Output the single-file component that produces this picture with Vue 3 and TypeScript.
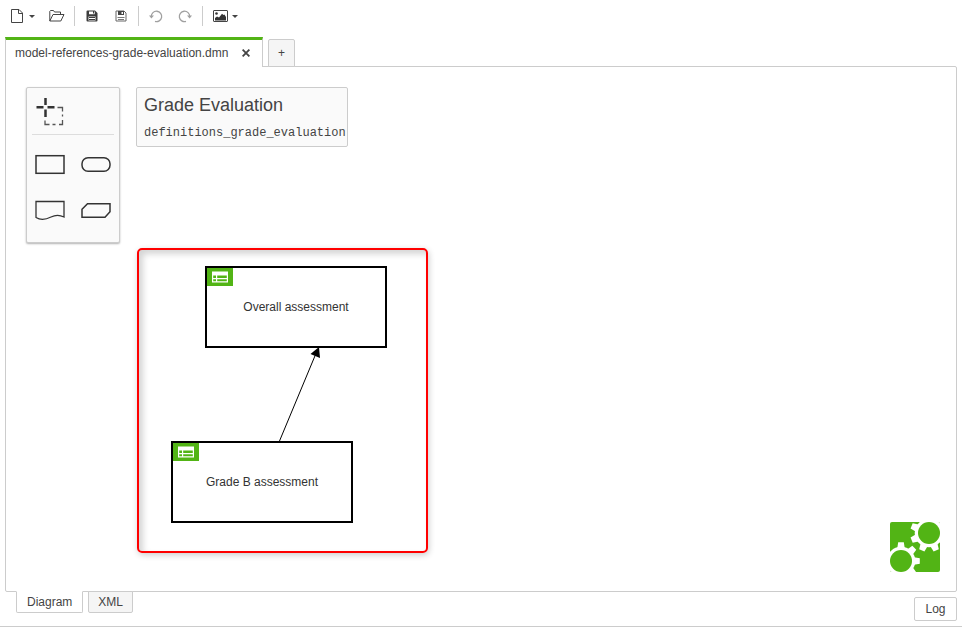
<script setup lang="ts">
import { ref } from 'vue'

interface DecisionNode {
  id: string
  label: string
  x: number
  y: number
}

const decisions: DecisionNode[] = [
  { id: 'overall', label: 'Overall assessment', x: 199, y: 199 },
  { id: 'grade-b', label: 'Grade B assessment', x: 165, y: 374 },
]

const views = ['Diagram', 'XML']
const activeView = ref('Diagram')
</script>

<template>
  <div class="app">
    <header class="toolbar">
      <div class="group">
        <button class="tool menu" type="button" aria-label="New file">
          <svg width="12" height="14" viewBox="0 0 12 14" fill="none" stroke="#444">
            <path d="M.5.5H8L11.500 4V13.500H.5ZM7.500.5V4.500H11.500" />
          </svg>
          <span class="caret"></span>
        </button>
        <button class="tool" type="button" aria-label="Open file">
          <svg width="16" height="12" viewBox="0 0 16 12" fill="none" stroke="#444" stroke-linejoin="round">
            <path d="M.8 11V1.300L1.500.5H4.500L5.500 2H11.500V4.500M.8 11 4 4.500H15L11.800 11Z" />
          </svg>
        </button>
      </div>
      <div class="group">
        <button class="tool" type="button" aria-label="Save">
          <svg width="12" height="12" viewBox="0 0 12 12">
            <path fill="#3c3c3c" fill-rule="evenodd" d="M.5 1.500Q.5.5 1.500.5H9L11.500 3V10.500Q11.500 11.500 10.500 11.500H1.500Q.5 11.500.5 10.500ZM3 1.500V4.200H8.700V1.500ZM2.500 6.500V10.500H9.500V6.500Z" />
            <path stroke="#3c3c3c" d="M3 7.500H9M3 9.500H9M7.500 1V3.500" />
          </svg>
        </button>
        <button class="tool" type="button" aria-label="Save as">
          <svg width="12" height="12" viewBox="0 0 12 12">
            <path fill="none" stroke="#666" d="M1 1H9L11 3V11H1Z" />
            <path fill="#444" fill-rule="evenodd" d="M3 1H9V5H3ZM6.500 2V4H8V2Z" />
            <path stroke="#777" d="M2.500 7.500H9.500M3 9.500H9" />
          </svg>
        </button>
      </div>
      <div class="group">
        <button class="tool" type="button" aria-label="Undo">
          <svg width="14" height="14" viewBox="0 0 14 14" fill="none" stroke="#a0a0a0" stroke-width="1.300">
            <path d="M2.300 7.500A5.200 5.200 0 1 1 6 12.400" />
            <path d="M0 6.500H5L2.400 9.500Z" fill="#a0a0a0" stroke="none" />
          </svg>
        </button>
        <button class="tool" type="button" aria-label="Redo">
          <svg width="14" height="14" viewBox="0 0 14 14" fill="none" stroke="#a0a0a0" stroke-width="1.300">
            <path d="M11.700 7.500A5.200 5.200 0 1 0 8 12.400" />
            <path d="M14 6.500H9L11.600 9.500Z" fill="#a0a0a0" stroke="none" />
          </svg>
        </button>
      </div>
      <div class="group">
        <button class="tool menu image" type="button" aria-label="Export as image">
          <svg width="15" height="12" viewBox="0 0 15 12">
            <rect x=".5" y=".5" width="14" height="11" rx=".5" fill="none" stroke="#444" />
            <circle cx="3.500" cy="3.500" r="1.300" fill="#333" />
            <path fill="#333" d="M2 10.500V8L4 6.500 6 7.500 9 3.800 10.500 5 11.500 4.500 13 7V10.500Z" />
          </svg>
          <span class="caret"></span>
        </button>
      </div>
    </header>

    <nav class="file-tabs">
      <div class="file-tab">
        <span>model-references-grade-evaluation.dmn</span>
        <button class="close" type="button" aria-label="Close tab">
          <svg width="8" height="8" viewBox="0 0 8 8" stroke="#444" stroke-width="1.800">
            <path d="M.6.6 7.400 7.400M7.400.6.6 7.400" />
          </svg>
        </button>
      </div>
      <button class="add-tab" type="button">+</button>
    </nav>

    <main class="canvas">
      <aside class="palette">
        <button class="entry" type="button" aria-label="Lasso tool">
          <svg width="30" height="30" viewBox="0 0 30 30" fill="none" stroke="#333">
            <path stroke-width="2.500" d="M10.500 1V8M10.500 12.500V20M1.500 10.300H8.500M12.500 10.300H19.500" />
            <path stroke="#555" stroke-width="1.300" d="M22.500 10.500H27.500V14.500M27.500 17.500V19.500M27.500 23V27.500H24M20.500 27.500H17.500M14.500 27.500H10V23.500" />
          </svg>
        </button>
        <hr class="separator" />
        <div class="shapes">
          <button class="entry" type="button" aria-label="Create decision">
            <svg width="30" height="30" viewBox="0 0 30 30" fill="none" stroke="#333" stroke-width="1.500">
              <rect x="1" y="5.700" width="28" height="17.600" />
            </svg>
          </button>
          <button class="entry" type="button" aria-label="Create input data">
            <svg width="30" height="30" viewBox="0 0 30 30" fill="none" stroke="#333" stroke-width="1.500">
              <rect x="1" y="7.700" width="28" height="13.600" rx="6" />
            </svg>
          </button>
          <button class="entry" type="button" aria-label="Create knowledge source">
            <svg width="30" height="30" viewBox="0 0 30 30" fill="none" stroke="#333" stroke-width="1.300">
              <path d="M1 21.500V5.500H29V21C25 19 21 18.500 16 21S6 24.500 1 21.500Z" />
            </svg>
          </button>
          <button class="entry" type="button" aria-label="Create business knowledge model">
            <svg width="30" height="30" viewBox="0 0 30 30" fill="none" stroke="#333" stroke-width="1.500">
              <path d="M1 21.300V13.300L6.500 7.700H29V15.700L24 21.300Z" />
            </svg>
          </button>
        </div>
      </aside>

      <section class="definitions">
        <h1>Grade Evaluation</h1>
        <code>definitions_grade_evaluation</code>
      </section>

      <div class="highlight"></div>

      <svg class="edge" width="60" height="100" viewBox="0 0 60 100">
        <path d="M13.500 94 51 4" stroke="#000" fill="none" />
        <path d="M53 0 54 11 44.500 7Z" />
      </svg>

      <div
        v-for="node in decisions"
        :key="node.id"
        class="decision"
        :style="{ left: node.x + 'px', top: node.y + 'px' }"
      >
        <span class="badge">
          <svg width="16" height="12" viewBox="0 0 16 12">
            <path fill="#fff" fill-rule="evenodd" d="M0 .5H16V11.500H0ZM1.200 4.500V7H4V4.500ZM5.200 4.500V7H14.800V4.500ZM1.200 8.300V10.300H4V8.300ZM5.200 8.300V10.300H14.800V8.300Z" />
          </svg>
        </span>
        {{ node.label }}
      </div>

      <a class="logo" href="#" aria-label="Project home">
        <svg width="50" height="50" viewBox="0 0 50 50">
          <defs>
            <clipPath id="logo-tile"><rect width="50" height="50" rx="2" /></clipPath>
          </defs>
          <g clip-path="url(#logo-tile)">
            <rect width="50" height="50" fill="#52b415" />
            <path fill="#fff" d="M39 0H50V11ZM0 39V50H11Z" />
            <g fill="#fff" transform="translate(39 11)">
              <circle r="14.300" />
              <path v-for="a in [22.5, 67.5, 112.5, 157.5, 202.5]" :key="a" :transform="`rotate(${a})`" d="M13-3.700 18.800-2.800V2.800L13 3.700Z" />
            </g>
            <g fill="#fff" transform="translate(11 39)">
              <circle r="14.300" />
              <path v-for="a in [-90, -45, 0, 45]" :key="a" :transform="`rotate(${a})`" d="M13-3.700 18.800-2.800V2.800L13 3.700Z" />
            </g>
          </g>
          <circle cx="39" cy="11" r="11" fill="#52b415" />
          <circle cx="11" cy="39" r="11" fill="#52b415" />
        </svg>
      </a>
    </main>

    <footer class="footer">
      <nav class="view-tabs">
        <button
          v-for="view in views"
          :key="view"
          type="button"
          class="view-tab"
          :class="{ active: view === activeView }"
          @click="activeView = view"
        >
          {{ view }}
        </button>
      </nav>
      <button class="log" type="button">Log</button>
    </footer>
  </div>
</template>

<style>
body {
  margin: 0;
  background: #fff;
}
</style>

<style scoped>
.app {
  display: flex;
  flex-direction: column;
  box-sizing: border-box;
  height: 100vh;
  border-bottom: 1px solid #ccc;
  color: #444;
  font: 12px/16px "Liberation Sans", Arial, sans-serif;
}

button {
  margin: 0;
  padding: 0;
  border: 0;
  background: none;
  color: inherit;
  font: inherit;
  cursor: pointer;
}

svg {
  display: block;
  flex: none;
}

.toolbar {
  display: flex;
  align-items: center;
  height: 20px;
  padding: 6px 7px 11px;
}

.group {
  display: flex;
  gap: 1px;
}

.group + .group {
  margin-left: 3px;
  padding-left: 3px;
  border-left: 1px solid #ccc;
}

.tool {
  display: flex;
  align-items: center;
  justify-content: center;
  width: 28px;
  height: 20px;
}

.tool.menu {
  justify-content: flex-start;
  gap: 6px;
  width: 35px;
  padding-left: 4px;
}

.tool.image {
  gap: 4px;
  padding-left: 7px;
}

.caret {
  border: 3px solid transparent;
  border-top-color: #444;
  border-bottom: 0;
}

.file-tabs {
  position: relative;
  z-index: 1;
  display: flex;
  align-items: flex-end;
  gap: 5px;
  margin: 0 5px -1px;
}

.file-tab {
  display: flex;
  align-items: center;
  justify-content: space-between;
  gap: 8px;
  box-sizing: border-box;
  min-width: 258px;
  height: 30px;
  padding: 0 12px 2px 9px;
  border: solid #ccc;
  border-width: 0 1px;
  border-top: 3px solid #52b415;
  background: #fff;
}

.add-tab {
  box-sizing: border-box;
  width: 27px;
  height: 28px;
  border: 1px solid #ccc;
  border-radius: 2px 2px 0 0;
  background: #f5f5f5;
}

.canvas {
  position: relative;
  flex: 1;
  margin: 0 5px;
  border: 1px solid #ccc;
  border-radius: 0 2px 2px 2px;
  overflow: hidden;
}

.palette {
  position: absolute;
  left: 20px;
  top: 20px;
  padding: 1px 5px 8px;
  border: 1px solid #ccc;
  border-radius: 2px;
  background: #fafafa;
  box-shadow: 0 1px 2px rgba(0, 0, 0, 0.3);
}

.entry {
  display: flex;
  align-items: center;
  justify-content: center;
  width: 46px;
  height: 46px;
}

.palette > .entry {
  width: 36px;
  height: 45px;
}

.separator {
  margin: 0 0 7px;
  border: 0;
  border-top: 1px solid #ddd;
}

.shapes {
  display: grid;
  grid-template-columns: 46px 46px;
  margin: 0 -5px;
}

.definitions {
  position: absolute;
  left: 130px;
  top: 20px;
  padding: 7px 1px 5px 7px;
  border: 1px solid #ccc;
  border-radius: 2px;
  background: #fafafa;
}

.definitions h1 {
  margin: 0 0 10px;
  font: 18px/20px "Liberation Sans", sans-serif;
}

.definitions code {
  display: block;
  font: 12px/16px "Liberation Mono", monospace;
}

.highlight {
  position: absolute;
  left: 131px;
  top: 181px;
  box-sizing: border-box;
  width: 291px;
  height: 305px;
  border: 2px solid #f00;
  border-radius: 5px;
  box-shadow: 1px 2px 6px rgba(0, 0, 0, 0.2), inset 4px 4px 6px rgba(0, 0, 0, 0.17);
}

.edge {
  position: absolute;
  left: 260px;
  top: 280px;
}

.decision {
  position: absolute;
  display: flex;
  align-items: center;
  justify-content: center;
  box-sizing: border-box;
  width: 182px;
  height: 82px;
  border: 2px solid #000;
  background: #fff;
  color: #333;
}

.badge {
  position: absolute;
  left: 0;
  top: 0;
  display: flex;
  align-items: center;
  justify-content: center;
  width: 26px;
  height: 18px;
  background: #52b415;
}

.logo {
  position: absolute;
  right: 16px;
  bottom: 19px;
}

.footer {
  position: relative;
  display: flex;
  justify-content: space-between;
  align-items: flex-end;
  height: 30px;
  margin: -1px 5px 0;
  padding-bottom: 5px;
}

.view-tabs {
  display: flex;
  align-self: flex-start;
  gap: 5px;
  padding-left: 11px;
}

.view-tab {
  height: 22px;
  padding: 0 9px;
  border: 1px solid #ccc;
  border-radius: 0 0 2px 2px;
  background: #f5f5f5;
}

.view-tab.active {
  padding: 0 10px;
  border-top-color: #fff;
  background: #fff;
}

.log {
  min-width: 43px;
  height: 24px;
  padding: 0 10px;
  border: 1px solid #ccc;
  border-radius: 2px;
}
</style>
